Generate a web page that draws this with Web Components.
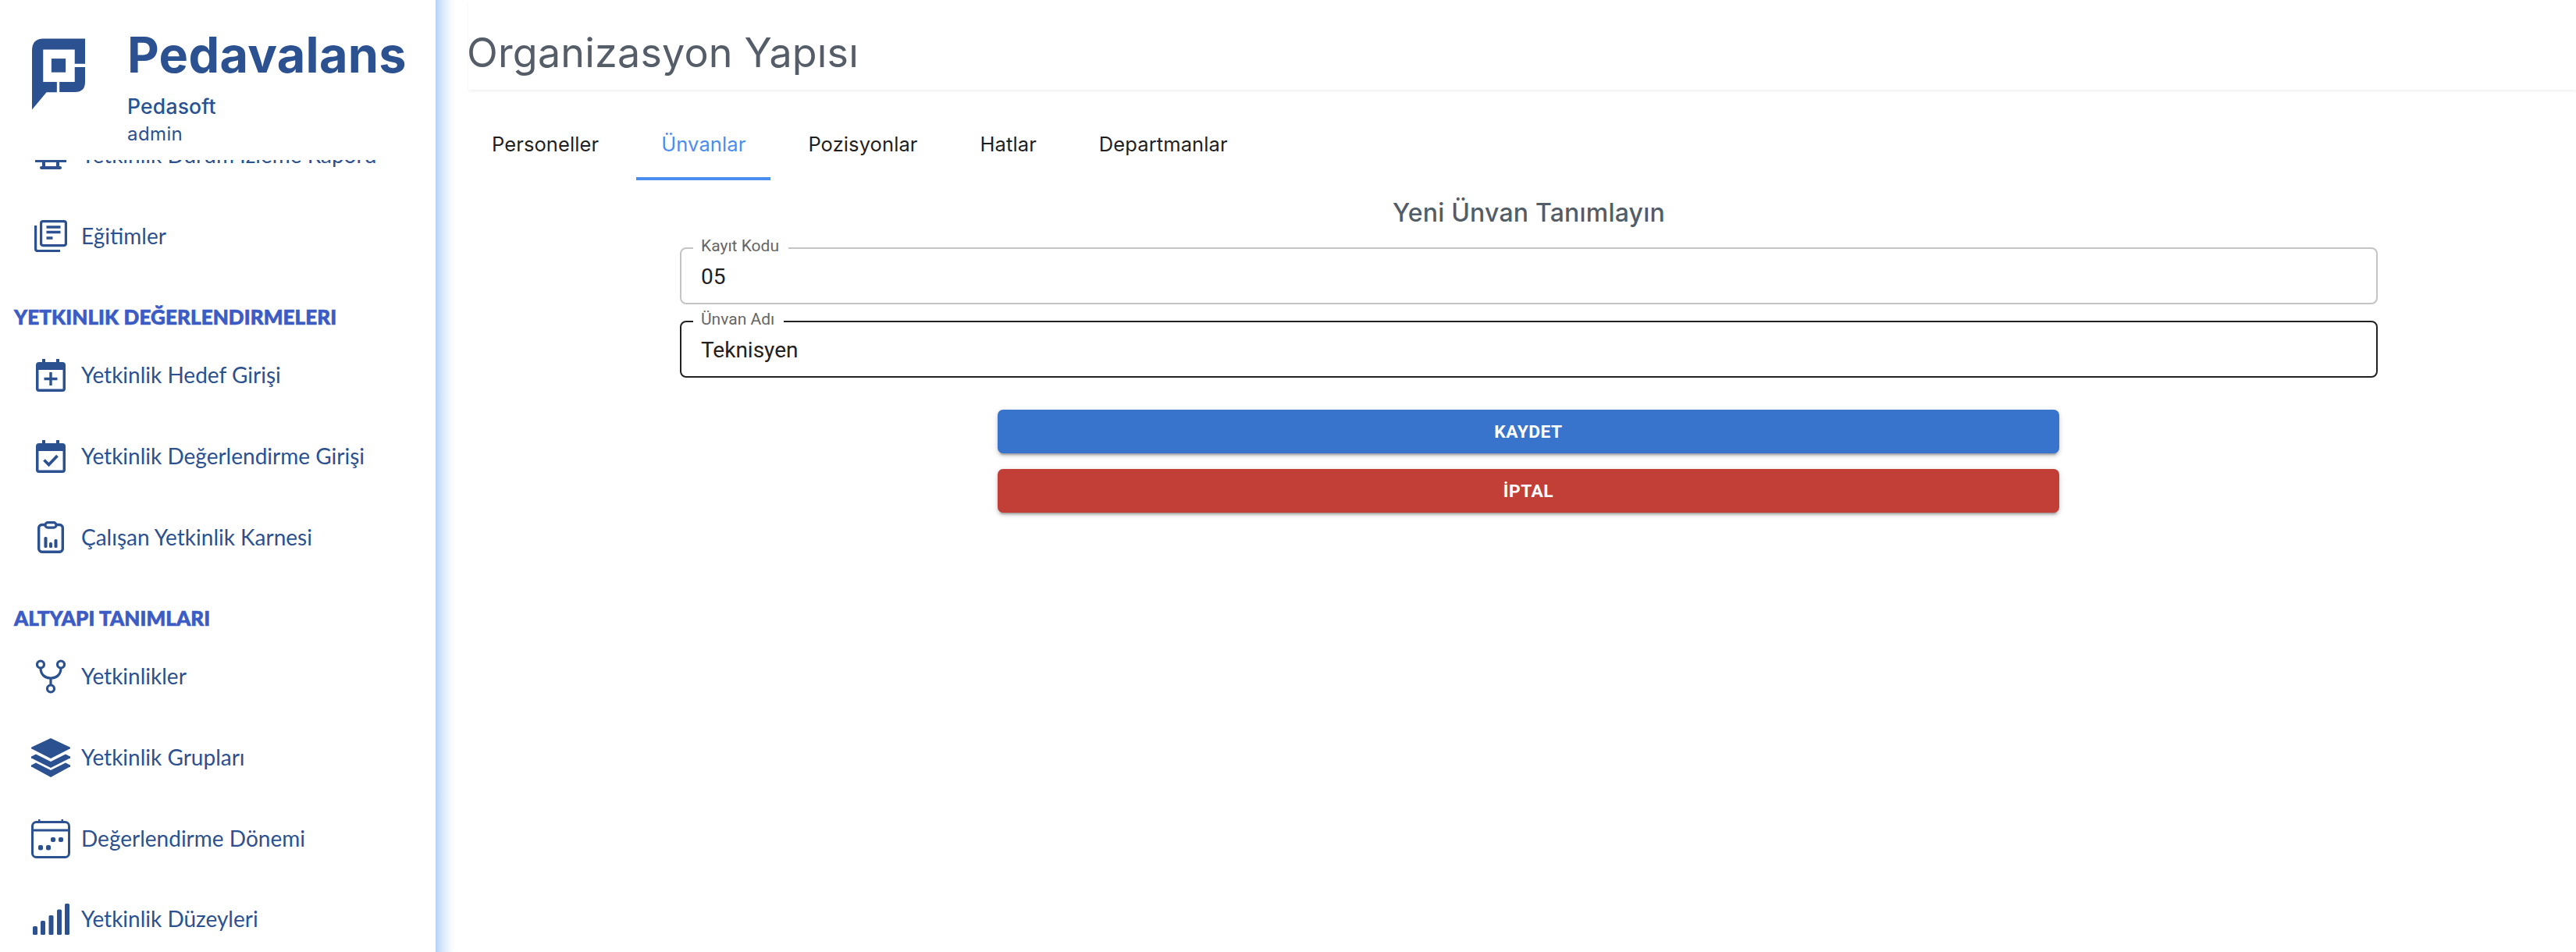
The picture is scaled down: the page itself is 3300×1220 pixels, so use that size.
<!DOCTYPE html>
<html lang="tr"><head><meta charset="utf-8"><title>Organizasyon Yapısı</title>
<style>
html,body{margin:0;height:100%;overflow:hidden;background:#fff}
app-shell{height:1220px}
</style></head><body>
<app-shell>
  <side-bar slot="side">
    <nav-item label="Yetkinlik Durum İzleme Raporu" icon="monitor"></nav-item>
    <nav-item label="Eğitimler" icon="news"></nav-item>
    <nav-heading>YETKINLIK DEĞERLENDIRMELERI</nav-heading>
    <nav-item label="Yetkinlik Hedef Girişi" icon="calplus"></nav-item>
    <nav-item label="Yetkinlik Değerlendirme Girişi" icon="calcheck"></nav-item>
    <nav-item label="Çalışan Yetkinlik Karnesi" icon="clip"></nav-item>
    <nav-heading>ALTYAPI TANIMLARI</nav-heading>
    <nav-item label="Yetkinlikler" icon="fork"></nav-item>
    <nav-item label="Yetkinlik Grupları" icon="layers"></nav-item>
    <nav-item label="Değerlendirme Dönemi" icon="calgrid"></nav-item>
    <nav-item label="Yetkinlik Düzeyleri" icon="bars"></nav-item>
  </side-bar>
  <main-pane slot="main"></main-pane>
</app-shell>
<script>
const C='#2c5190';
const ICONS={
monitor:`<svg viewBox="0 0 44 44" width="44" height="44" fill="${C}"><rect x="2" y="2" width="40" height="24" rx="2"/><rect x="2" y="28" width="40" height="3"/><rect x="11" y="31" width="4" height="7"/><rect x="29" y="31" width="4" height="7"/><rect x="8" y="36" width="28" height="4" rx="2"/></svg>`,
news:`<svg viewBox="0 0 42 41" width="42" height="41" fill="none" stroke="${C}" stroke-width="3.200"><path d="M1.600 7V37a2.500 2.500 0 0 0 2.500 2.500H33"/><rect x="8.600" y="1.600" width="31.800" height="31" rx="2.500"/><path d="M15.500 9H33.500M15.500 15.500H33.500M15.500 23H23.500" stroke-width="3.600"/></svg>`,
calplus:`<svg viewBox="0 0 38 42" width="38" height="42"><path fill="${C}" d="M8 0h4v4h14V0h4v4h4a4 4 0 0 1 4 4v30a4 4 0 0 1-4 4H4a4 4 0 0 1-4-4V8a4 4 0 0 1 4-4h4z"/><rect x="3.500" y="14" width="31" height="24.500" fill="#fff"/><path fill="${C}" d="M17.300 17h3.400v6.800h6.800v3.400h-6.800V34h-3.400v-6.800h-6.800v-3.400h6.800z"/></svg>`,
calcheck:`<svg viewBox="0 0 38 42" width="38" height="42"><path fill="${C}" d="M8 0h4v4h14V0h4v4h4a4 4 0 0 1 4 4v30a4 4 0 0 1-4 4H4a4 4 0 0 1-4-4V8a4 4 0 0 1 4-4h4z"/><rect x="3.500" y="14" width="31" height="24.500" fill="#fff"/><path fill="none" stroke="${C}" stroke-width="3.800" d="M10.500 25.500l6 6 11-11.500"/></svg>`,
clip:`<svg viewBox="0 0 34 41" width="34" height="41"><rect x="1.700" y="4.500" width="30.600" height="34.800" rx="4" fill="none" stroke="${C}" stroke-width="3.400"/><rect x="10" y="1.600" width="14" height="6.500" rx="3.200" fill="#fff" stroke="${C}" stroke-width="3.200"/><rect x="8.500" y="20" width="4" height="14" rx="1.500" fill="${C}"/><rect x="15" y="27" width="4" height="7" rx="1.500" fill="${C}"/><rect x="21.500" y="23" width="4" height="11" rx="1.500" fill="${C}"/></svg>`,
fork:`<svg viewBox="0 0 38 44" width="38" height="44" fill="none" stroke="${C}" stroke-width="3.200"><circle cx="6" cy="6.500" r="4.500"/><circle cx="32" cy="6.500" r="4.500"/><circle cx="19" cy="37.500" r="4.500"/><path d="M19 33V24M6 11c0 8 5 13 13 13s13-5 13-13"/></svg>`,
layers:`<svg viewBox="0 0 50 50" width="50" height="50" fill="${C}"><path d="M25 0L48.500 11a1.500 1.500 0 0 1 0 3L25 26 1.500 14a1.500 1.500 0 0 1 0-3z"/><path d="M6 20.500L25 30l19-9.500 4.800 2.600a1.500 1.500 0 0 1 0 3L25 38 1.200 26.100a1.500 1.500 0 0 1 0-3z"/><path d="M6 31.500L25 41l19-9.500 4.800 2.600a1.500 1.500 0 0 1 0 3L25 50 1.200 37.100a1.500 1.500 0 0 1 0-3z"/></svg>`,
calgrid:`<svg viewBox="0 0 50 50" width="50" height="50"><rect x="1.500" y="3.500" width="47" height="45" rx="5" fill="none" stroke="${C}" stroke-width="3"/><rect x="1.500" y="12.500" width="47" height="3" fill="${C}"/><rect x="9" y="0" width="2.500" height="5" fill="${C}"/><rect x="38.500" y="0" width="2.500" height="5" fill="${C}"/><rect x="25" y="23" width="6" height="6" rx="2" fill="${C}"/><rect x="35" y="23" width="6" height="6" rx="2" fill="${C}"/><rect x="9" y="33" width="6" height="6.500" rx="2" fill="${C}"/><rect x="19" y="33" width="6" height="6.500" rx="2" fill="${C}"/></svg>`,
bars:`<svg viewBox="0 0 47 40" width="47" height="40" fill="${C}"><rect x="0" y="29" width="6" height="11" rx="1.500"/><rect x="10" y="22" width="6" height="18" rx="1.500"/><rect x="20.500" y="15" width="6" height="25" rx="1.500"/><rect x="31" y="7.500" width="6" height="32.500" rx="1.500"/><rect x="41" y="0" width="6" height="40" rx="1.500"/></svg>`
};
function def(name,html){customElements.define(name,class extends HTMLElement{constructor(){super();const s=this.attachShadow({mode:'open'});s.innerHTML=typeof html==='function'?html(this):html;}});}

def('app-shell',`<style>:host{display:flex;width:3300px;overflow:hidden}
::slotted([slot=side]){flex:0 0 558px}::slotted([slot=main]){flex:1;min-width:0}</style>
<slot name="side"></slot><slot name="main"></slot>`);

def('brand-logo',`<style>:host{display:block;width:68px;height:92px;flex:none}svg{display:block}</style>
<svg viewBox="62 58 205 274" width="68" height="92" fill="${C}"><path d="M62 104Q62 58 106 58H267V155H227V100H105V225H158V265H118L62 332Z"/><path d="M168 225H227V168H267V225Q267 264 228 264H168Z"/><rect x="137" y="135" width="55" height="53"/></svg>`);

def('side-bar',`<style>
:host{display:flex;flex-direction:column;height:1220px;position:relative;z-index:2;background:#fff}
:host::after{content:"";position:absolute;left:100%;top:0;bottom:0;width:26px;background:linear-gradient(90deg,#b3d3f8,#d9e9fb 35%,#f3f8fe 70%,#fff)}
.head{flex:0 0 205px;box-sizing:border-box;display:flex;padding:49px 0 0 41px;gap:54px;color:${C}}
.txt{display:flex;flex-direction:column}
.b{font:700 63px/43px Inter,sans-serif;letter-spacing:.3px;height:43px;margin-left:0}
.o{font:500 26.500px/30px Inter,sans-serif;margin-top:29px;letter-spacing:.2px}
.u{font:400 24px/30px Inter,sans-serif;margin-top:6px;letter-spacing:.4px}
.scroll{flex:1;overflow:hidden}
.list{margin-top:-58px}
</style>
<div class="head"><brand-logo></brand-logo><div class="txt"><div class="b">Pedavalans</div><div class="o">Pedasoft</div><div class="u">admin</div></div></div>
<div class="scroll"><div class="list"><slot></slot></div></div>`);

def('nav-item',h=>`<style>
:host{display:flex;align-items:center;height:103.750px;color:${C};font:400 28px Lato,sans-serif}
.i{flex:0 0 50px;margin-left:40px;display:flex;justify-content:center;align-items:center}
svg{display:block}
.l{margin-left:14px;white-space:nowrap;position:relative;top:-1px}
</style><span class="i">${ICONS[h.getAttribute('icon')]}</span><span class="l">${h.getAttribute('label')}</span>`);

def('nav-heading',`<style>:host{display:block;box-sizing:border-box;height:74.750px;padding:27px 0 0 18px;color:#3b5bc5;font:900 26px/48px Lato,sans-serif;letter-spacing:.1px;-webkit-text-stroke:.7px #3b5bc5;white-space:nowrap}</style><slot></slot>`);

def('tab-bar',`<style>:host{display:flex;gap:16px;height:72px;margin-top:44px;margin-left:40px}</style><slot></slot>`);
def('tab-item',`<style>:host{display:flex;align-items:center;box-sizing:border-box;padding:0 32px 18px;height:72px;color:#1f1f1f;font:400 25.500px Inter,sans-serif;letter-spacing:.1px;border-bottom:4px solid transparent}
:host([active]){color:#4a8df0;border-bottom-color:#4a8df0}</style><slot></slot>`);

def('text-field',h=>`<style>
:host{display:block;position:relative;box-sizing:border-box;height:73px;border:2px solid #c4c4c4;border-radius:8px;color:#212121;font:400 28px Roboto,sans-serif}
:host([focus]){border-color:#212121}
.lab{position:absolute;left:15px;top:-16px;padding:0 12px 0 10px;background:linear-gradient(#fff0 0 40%,#fff 40%);font:400 21px/24px Roboto,sans-serif;color:#666;white-space:nowrap}
.v{position:absolute;left:25px;top:19px;line-height:33px}
</style><span class="lab">${h.getAttribute('label')}</span><span class="v">${h.getAttribute('value')}</span>`);

def('action-button',`<style>:host{display:flex;align-items:center;justify-content:center;width:1360px;height:56px;border-radius:7px;background:var(--bg);color:#fff;font:700 22.750px Roboto,sans-serif;letter-spacing:.5px;box-shadow:0 5px 2px -3px rgba(0,0,0,.2),0 3px 4px 0 rgba(0,0,0,.14),0 2px 9px 0 rgba(0,0,0,.12)}</style><slot></slot>`);

def('title-form',`<style>
:host{display:flex;flex-direction:column;align-items:center;width:2175px;margin:0 auto}
h2{margin:0;font:500 32px/40px Inter,sans-serif;letter-spacing:.2px;color:#535d68;height:43px}
.fields{align-self:stretch;display:flex;flex-direction:column;gap:21px;margin-top:21px}
.btns{display:flex;flex-direction:column;gap:20px;margin:41px 1px 0 0}
</style>
<h2>Yeni Ünvan Tanımlayın</h2>
<div class="fields"><text-field label="Kayıt Kodu" value="05"></text-field><text-field focus label="Ünvan Adı" value="Teknisyen"></text-field></div>
<div class="btns"><action-button style="--bg:#3874cb">KAYDET</action-button><action-button style="--bg:#c13f37">İPTAL</action-button></div>`);

def('main-pane',`<style>
:host{display:block;height:1220px;background:#fff;overflow:hidden}
.top{margin-left:42px;height:115px;box-sizing:border-box;padding-top:43px;box-shadow:0 2px 3px rgba(0,0,0,.06);font:400 52px/50px Inter,sans-serif;letter-spacing:.2px;color:#555e68}
.form{margin-top:22px;padding-left:313px;width:2175px}
</style>
<div class="top"><span style="margin-left:-2px">Organizasyon Yapısı</span></div>
<tab-bar><tab-item>Personeller</tab-item><tab-item active>Ünvanlar</tab-item><tab-item>Pozisyonlar</tab-item><tab-item>Hatlar</tab-item><tab-item>Departmanlar</tab-item></tab-bar>
<div class="form"><title-form></title-form></div>`);
</script>
</body></html>
